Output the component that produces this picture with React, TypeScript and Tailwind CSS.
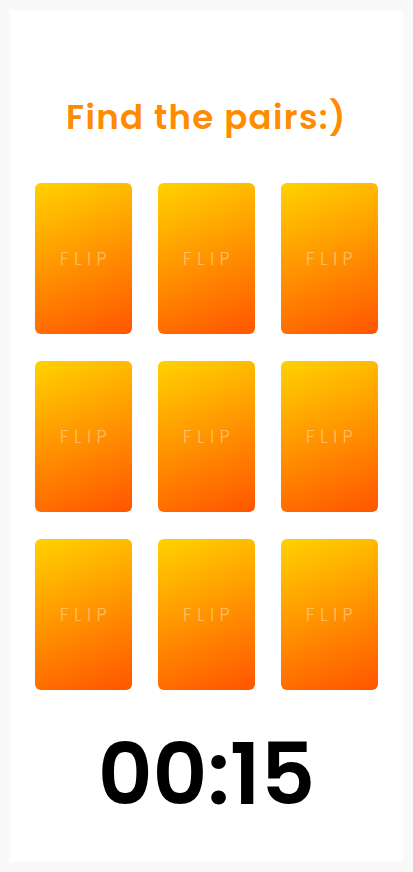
const cards = Array.from({ length: 9 }, (_, i) => i);

function Card() {
    return (
        <div className="flex h-[151px] w-[97px] items-center justify-center rounded-[6px] bg-[linear-gradient(160deg,#ffd200,#ff5500)] shadow-[0_0_1px_rgba(0,0,0,0.15)]">
            <span className="pl-[5px] text-[18px] font-light tracking-[0.3em] text-white/40">
                FLIP
            </span>
        </div>
    );
}

export default function App() {
    return (
        <div
            className="min-h-[872px] bg-[#f9f9f9] p-[10px]"
            style={{ fontFamily: "Poppins, Inter, 'Noto Sans', sans-serif" }}
        >
            <main className="flex h-[852px] flex-col items-center bg-white">
                <h1 className="mt-[82px] text-[34px] font-semibold tracking-[0.04em] text-[#ff8c00]">
                    Find the pairs:)
                </h1>

                <div className="mt-[40px] grid grid-cols-3 gap-x-[26px] gap-y-[27px]">
                    {cards.map((c) => (
                        <Card key={c} />
                    ))}
                </div>

                <p className="mt-[42px] text-[85px] font-semibold leading-none text-black">
                    00:15
                </p>
            </main>
        </div>
    );
}
